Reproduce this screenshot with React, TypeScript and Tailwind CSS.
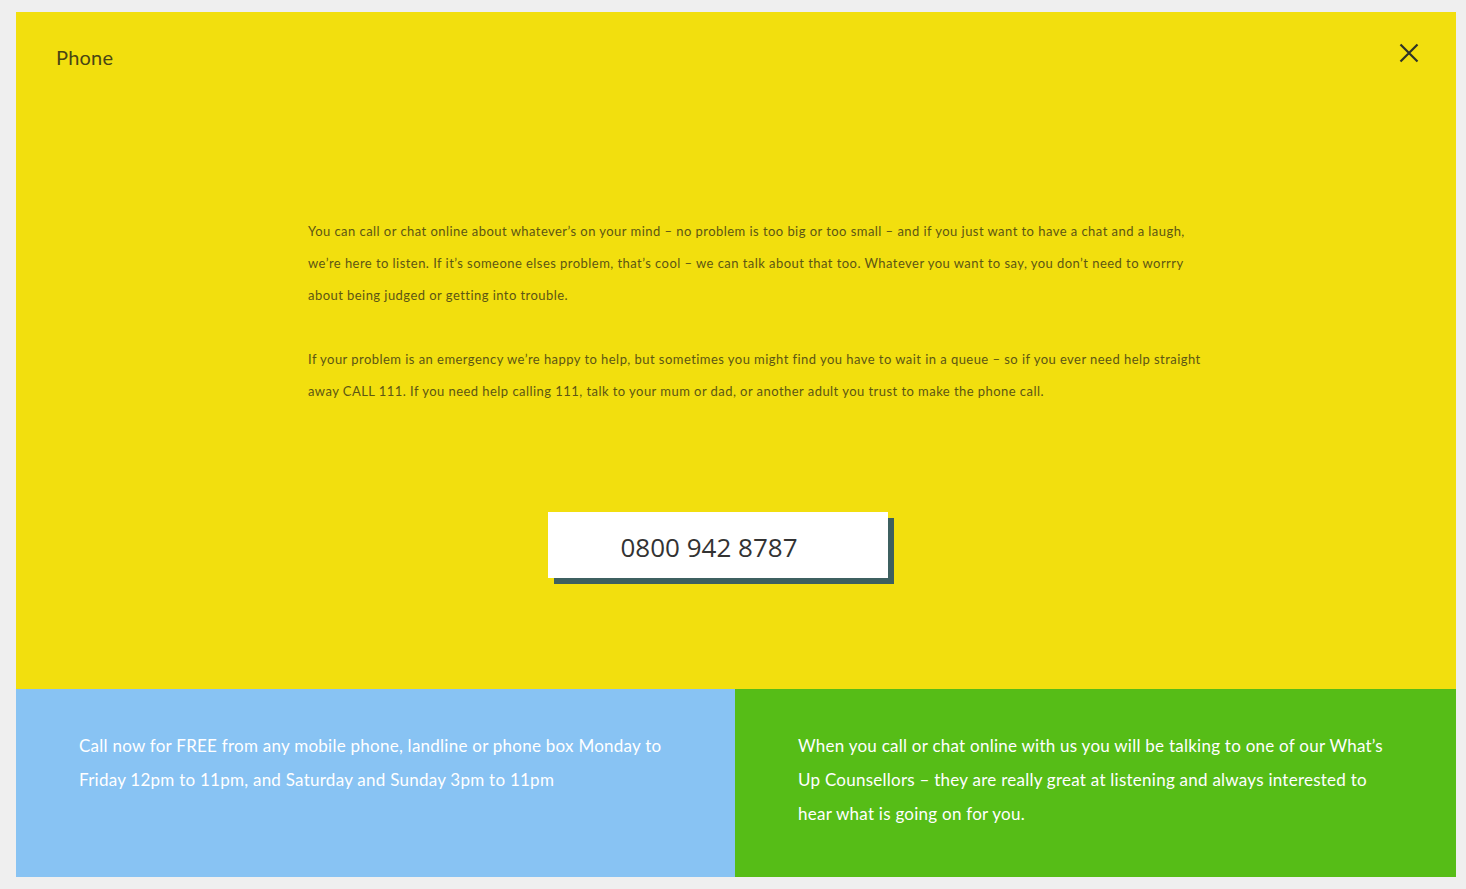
import React from "react";

export default function App() {
  return (
    <div className="min-h-[889px] w-full bg-[#efefef] pt-[12px] pb-[12px] pl-[16px] pr-[10px]" style={{ fontFamily: "Lato, 'Noto Sans', sans-serif" }}>
      <div className="flex flex-col">
        <div className="relative h-[677px] bg-[#f2df0e] flex flex-col">
          <div className="flex items-start justify-between pl-[40px] pr-[37px] pt-[32px]">
            <h2 className="text-[20px] leading-[26px] tracking-[0.2px] text-[#4a4514]">Phone</h2>
            <button className="mt-[-1px] text-[#2f3328]" aria-label="Close">
              <svg width="20" height="20" viewBox="0 0 20 20" fill="none" stroke="currentColor" strokeWidth="2.2" strokeLinecap="butt">
                <path d="M1.5 1.5 L18.5 18.5 M18.5 1.5 L1.5 18.5" />
              </svg>
            </button>
          </div>
          <div className="ml-[292px] mt-[145px] w-[902px] text-[13px] leading-[32px] tracking-[0.45px] text-[#5d5614]">
            <p>
              You can call or chat online about whatever’s on your mind – no problem is too big or too small – and if you just want to have a chat and a laugh, we’re here to listen. If it’s someone elses problem, that’s cool – we can talk about that too. Whatever you want to say, you don’t need to worrry about being judged or getting into trouble.
            </p>
            <p className="mt-[32px]">
              If your problem is an emergency we’re happy to help, but sometimes you might find you have to wait in a queue – so if you ever need help straight away CALL 111. If you need help calling 111, talk to your mum or dad, or another adult you trust to make the phone call.
            </p>
          </div>
          <div className="ml-[532px] mt-[105px] w-[340px] h-[66px] bg-white shadow-[6px_6px_0_0_#3e6060] flex items-center justify-center pr-[18px] pt-[4px]">
            <span className="text-[26px] text-[#333333]" style={{ fontFamily: "'Open Sans', sans-serif" }}>0800 942 8787</span>
          </div>
        </div>
        <div className="flex h-[188px]">
          <div className="w-[719px] bg-[#88c3f3] pl-[63px] pr-[50px] pt-[40px] text-[17px] leading-[34px] tracking-[0.25px] text-white">
            Call now for FREE from any mobile phone, landline or phone box Monday to Friday 12pm to 11pm, and Saturday and Sunday 3pm to 11pm
          </div>
          <div className="flex-1 bg-[#56bd17] pl-[63px] pr-[63px] pt-[40px] text-[17px] leading-[34px] tracking-[0.25px] text-white">
            When you call or chat online with us you will be talking to one of our What’s Up Counsellors – they are really great at listening and always interested to hear what is going on for you.
          </div>
        </div>
      </div>
    </div>
  );
}
